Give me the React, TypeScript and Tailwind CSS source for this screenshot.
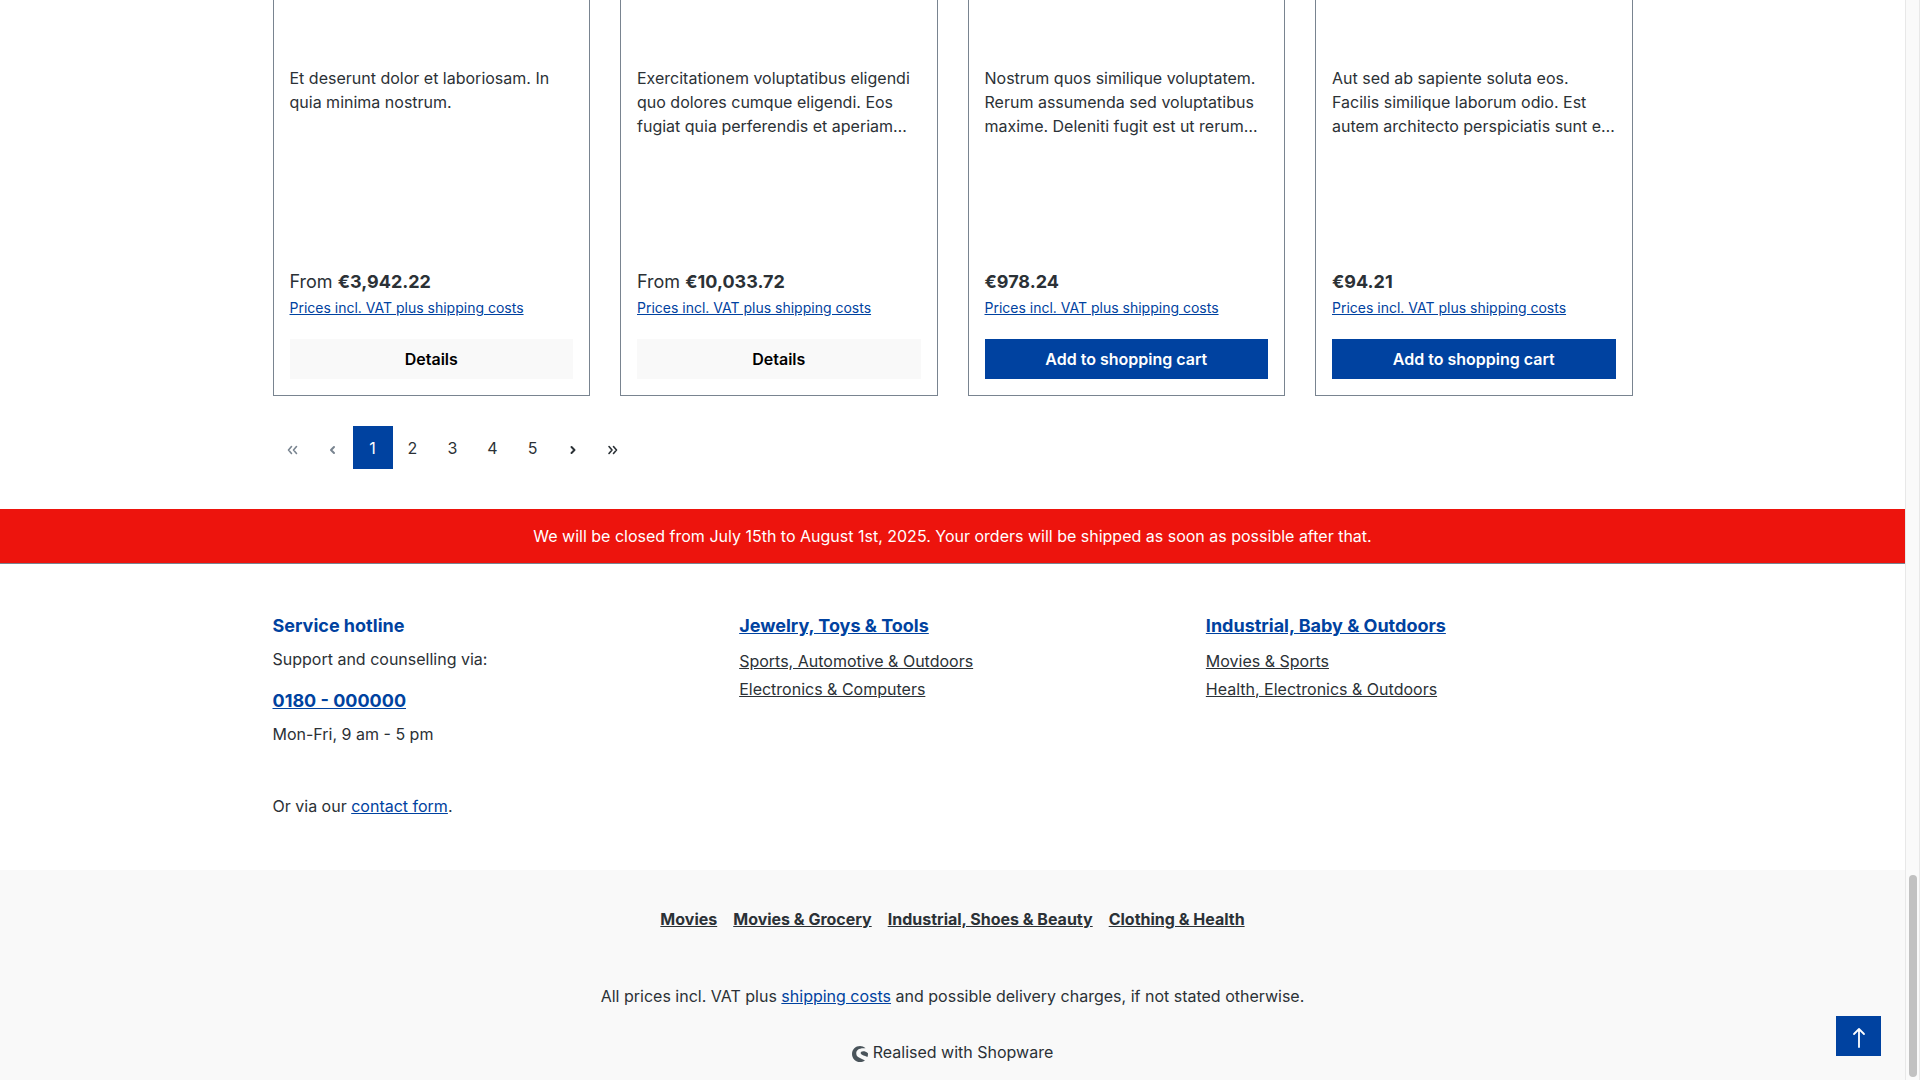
import type { ReactNode } from 'react';
import { SiShopware } from 'react-icons/si';

type Product = { text: string; from?: boolean; price: string; action: 'details' | 'cart' };

const products: Product[] = [
  { text: 'Et deserunt dolor et laboriosam. In quia minima nostrum.', from: true, price: '€3,942.22', action: 'details' },
  {
    text: 'Exercitationem voluptatibus eligendi quo dolores cumque eligendi. Eos fugiat quia perferendis et aperiam…',
    from: true,
    price: '€10,033.72',
    action: 'details',
  },
  {
    text: 'Nostrum quos similique voluptatem. Rerum assumenda sed voluptatibus maxime. Deleniti fugit est ut rerum…',
    price: '€978.24',
    action: 'cart',
  },
  {
    text: 'Aut sed ab sapiente soluta eos. Facilis similique laborum odio. Est autem architecto perspiciatis sunt e…',
    price: '€94.21',
    action: 'cart',
  },
];

const columns = [
  { title: 'Jewelry, Toys & Tools', links: ['Sports, Automotive & Outdoors', 'Electronics & Computers'] },
  { title: 'Industrial, Baby & Outdoors', links: ['Movies & Sports', 'Health, Electronics & Outdoors'] },
];

const serviceLinks = ['Movies', 'Movies & Grocery', 'Industrial, Shoes & Beauty', 'Clothing & Health'];

function Chevron({ d, bold = false }: { d: string; bold?: boolean }) {
  return (
    <svg viewBox="0 0 12 12" className="mt-1 size-3" fill="none" stroke="currentColor" strokeWidth={bold ? 2 : 1.6} strokeLinecap="round" strokeLinejoin="round">
      <path d={d} />
    </svg>
  );
}

function ProductCard({ product }: { product: Product }) {
  return (
    <article className="flex flex-col border border-t-0 border-[#798490] px-4 pt-[66px] pb-4">
      <p>{product.text}</p>
      <div className="mt-auto">
        <p className="text-lg leading-7">
          {product.from && 'From '}
          <strong className="font-bold">{product.price}</strong>
        </p>
        <a href="#shipping" className="mt-0.5 block text-sm leading-5 text-[#0042a0] underline">
          Prices incl. VAT plus shipping costs
        </a>
        {product.action === 'details' ? (
          <button className="mt-[21px] h-10 w-full bg-[#f9f9f9] font-semibold text-black">Details</button>
        ) : (
          <button className="mt-[21px] h-10 w-full bg-[#0042a0] font-semibold text-white">Add to shopping cart</button>
        )}
      </div>
    </article>
  );
}

function PageItem({ label, active, disabled, children }: { label: string; active?: boolean; disabled?: boolean; children: ReactNode }) {
  return (
    <li>
      <button
        aria-label={label}
        aria-current={active ? 'page' : undefined}
        disabled={disabled}
        className={
          active
            ? 'flex h-[43px] w-10 items-center justify-center bg-[#0042a0] text-white'
            : disabled
              ? 'flex h-[43px] w-10 items-center justify-center text-[#798490]'
              : 'flex h-[43px] w-10 items-center justify-center'
        }
      >
        {children}
      </button>
    </li>
  );
}

export default function App() {
  return (
    <div className="flex min-h-screen bg-white font-['Inter',sans-serif] text-base leading-6 text-[#2b3136]">
      <div className="flex min-w-0 flex-1 flex-col">
        <main className="mx-auto w-full max-w-[1400px] px-5 pb-10">
          <div className="grid auto-rows-[396px] grid-cols-4 gap-[30px]">
            {products.map((p) => (
              <ProductCard key={p.price} product={p} />
            ))}
          </div>
          <nav aria-label="Pages" className="mt-[30px]">
            <ul className="flex">
              <PageItem label="First page" disabled>
                <Chevron d="M4.5 2.5 1.5 6 4.5 9.5M9.5 2.5 6.5 6 9.5 9.5" />
              </PageItem>
              <PageItem label="Previous page" disabled>
                <Chevron bold d="M7 3 4 6 7 9" />
              </PageItem>
              {[1, 2, 3, 4, 5].map((n) => (
                <PageItem key={n} label={`Page ${n}`} active={n === 1}>
                  {n}
                </PageItem>
              ))}
              <PageItem label="Next page">
                <Chevron bold d="M4.5 3 7.5 6 4.5 9" />
              </PageItem>
              <PageItem label="Last page">
                <Chevron d="M2 2.5 5 6 2 9.5M6.5 2.5 9.5 6 6.5 9.5" />
              </PageItem>
            </ul>
          </nav>
        </main>

        <div className="border-b border-[#798490] bg-[#ed140d] py-[15px] text-center text-white">
          We will be closed from July 15th to August 1st, 2025. Your orders will be shipped as soon as possible after that.
        </div>

        <footer className="flex flex-1 flex-col">
          <div className="mx-auto grid w-full max-w-[1400px] grid-cols-3 gap-10 px-5 pt-12 pb-[52px]">
            <section>
              <h2 className="text-lg leading-[27px] font-bold text-[#0042a0]">Service hotline</h2>
              <p className="mt-2">Support and counselling via:</p>
              <a href="tel:0180000000" className="mt-4 inline-block text-lg leading-[27px] font-bold text-[#0042a0] underline">
                0180 - 000000
              </a>
              <p className="mt-2">Mon-Fri, 9 am - 5 pm</p>
              <p className="mt-12">
                Or via our{' '}
                <a href="#contact" className="text-[#0042a0] underline">
                  contact form
                </a>
                .
              </p>
            </section>
            {columns.map((c) => (
              <section key={c.title}>
                <h2 className="text-lg leading-[27px] font-bold text-[#0042a0]">
                  <a href="#category" className="underline">
                    {c.title}
                  </a>
                </h2>
                <ul className="mt-2">
                  {c.links.map((l) => (
                    <li key={l} className="leading-7">
                      <a href="#category" className="underline">
                        {l}
                      </a>
                    </li>
                  ))}
                </ul>
              </section>
            ))}
          </div>

          <div className="flex-1 bg-[#f9f9f9] pt-[37px] text-center">
            <ul className="flex justify-center gap-4">
              {serviceLinks.map((l) => (
                <li key={l}>
                  <a href="#service" className="font-bold underline">
                    {l}
                  </a>
                </li>
              ))}
            </ul>
            <p className="mt-[53px]">
              All prices incl. VAT plus{' '}
              <a href="#shipping" className="text-[#0042a0] underline">
                shipping costs
              </a>{' '}
              and possible delivery charges, if not stated otherwise.
            </p>
            <p className="mt-8 flex items-center justify-center gap-[5px]">
              <SiShopware className="mt-1 size-4 text-[#4a545b]" />
              Realised with Shopware
            </p>
          </div>
        </footer>
      </div>

      <div aria-hidden="true" className="flex w-[15px] flex-col justify-end border-x border-[#e8e8e8] bg-[#fafafa] px-[3px] pb-[3px]">
        <div className="h-[202px] w-2 rounded-full bg-[#c1c1c1]" />
      </div>

      <button aria-label="Back to top" className="fixed right-[39px] bottom-6 flex h-10 w-[45px] items-center justify-center bg-[#0042a0] text-white">
        <svg viewBox="0 0 22 22" className="mt-1 size-[22px]" fill="none" stroke="currentColor" strokeWidth="1.8" strokeLinecap="round" strokeLinejoin="round">
          <path d="M11 20V2M6 7l5-5 5 5" />
        </svg>
      </button>
    </div>
  );
}
